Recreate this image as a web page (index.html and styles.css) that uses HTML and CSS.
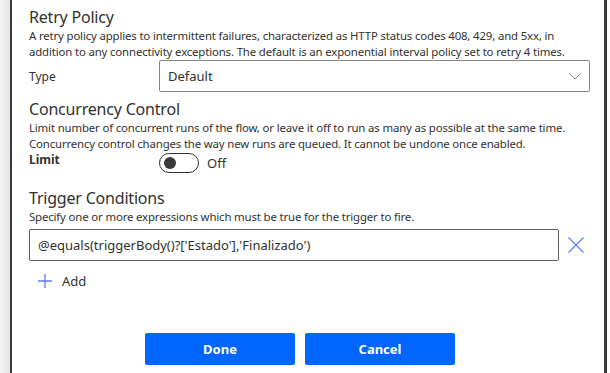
FILE: index.html
```html
<!DOCTYPE html>
<html>
<head>
<meta charset="utf-8">
<link rel="stylesheet" href="styles.css">
</head>
<body>
<div class="screen">
  <div class="shade"></div>
  <div class="panel">
    <div class="content">
      <section class="sec">
        <h2 class="title">Retry Policy</h2>
        <p class="desc">A retry policy applies to intermittent failures, characterized as HTTP status codes 408, 429, and 5xx, in addition to any connectivity exceptions. The default is an exponential interval policy set to retry 4 times.</p>
        <div class="row">
          <span class="label">Type</span>
          <div class="select">
            <span>Default</span>
            <svg class="chev" width="12" height="7" viewBox="0 0 12 7"><path d="M0.5 0.5 L6 6 L11.5 0.5" fill="none" stroke="#8a8886" stroke-width="1"/></svg>
          </div>
        </div>
      </section>
      <section class="sec sec2">
        <h2 class="title">Concurrency Control</h2>
        <p class="desc">Limit number of concurrent runs of the flow, or leave it off to run as many as possible at the same time. Concurrency control changes the way new runs are queued. It cannot be undone once enabled.</p>
        <div class="row row-toggle">
          <span class="label bold">Limit</span>
          <div class="toggle-wrap">
            <span class="toggle"><span class="knob"></span></span>
            <span class="toggle-text">Off</span>
          </div>
        </div>
      </section>
      <section class="sec sec3">
        <h2 class="title">Trigger Conditions</h2>
        <p class="desc">Specify one or more expressions which must be true for the trigger to fire.</p>
        <div class="cond">
          <div class="input">@equals(triggerBody()?['Estado'],'Finalizado')</div>
          <svg class="x" width="16" height="16" viewBox="0 0 16 16"><path d="M0.5 0.5 L15.5 15.5 M15.5 0.5 L0.5 15.5" stroke="#5b7cf5" stroke-width="1.2" fill="none"/></svg>
        </div>
        <div class="add">
          <svg width="16" height="16" viewBox="0 0 16 16"><path d="M8 1 V15 M1 8 H15" stroke="#5b7cf5" stroke-width="1.3" fill="none"/></svg>
          <span>Add</span>
        </div>
      </section>
      <div class="buttons">
        <button class="btn">Done</button>
        <button class="btn">Cancel</button>
      </div>
    </div>
  </div>
</div>
</body>
</html>
```
FILE: styles.css
```css
* { box-sizing: border-box; }
html, body { margin: 0; padding: 0; background: #fff; }
body {
  font-family: "Noto Sans", "Open Sans", sans-serif;
  color: #323130;
  width: 610px;
  height: 373px;
  overflow: hidden;
}
.screen { display: flex; height: 373px; }
.shade {
  width: 10px;
  background: linear-gradient(to right, #f4f4f4, #e6e6e6);
}
.panel {
  width: 597px;
  border-left: 2px solid #3a3a3a;
  border-right: 3px solid #3b3b3b;
  background: #fff;
}
.content { padding: 6px 0 0 17px; width: 578px; }
.title {
  margin: 0;
  font-size: 16px;
  font-weight: 400;
  line-height: 22px;
  letter-spacing: -0.2px;
}
.desc {
  margin: 0;
  font-size: 11.4px;
  line-height: 16px;
  letter-spacing: -0.15px;
}
.row { display: flex; align-items: center; }
.label { width: 130px; font-size: 12px; }
.bold { font-weight: 700; }
.select {
  width: 431px;
  height: 32px;
  border: 1px solid #8a8886;
  border-radius: 2px;
  display: flex;
  align-items: center;
  justify-content: space-between;
  padding: 0 8px 0 8px;
  font-size: 13px;
}
.chev { display: block; margin-top: 1px; }
.sec2 { margin-top: 6px; }
.row-toggle { align-items: flex-start; height: 24px; }
.row-toggle .label { line-height: 16px; margin-top: 0; }
.toggle-wrap { display: flex; align-items: center; gap: 8px; margin-top: 1px; }
.toggle {
  width: 40px; height: 20px;
  border: 1px solid #323130;
  border-radius: 10px;
  display: flex; align-items: center;
  padding-left: 4px;
}
.knob { width: 12px; height: 12px; border-radius: 50%; background: #3b3a39; }
.toggle-text { font-size: 13px; }
.sec3 { margin-top: 11px; }
.cond { display: flex; align-items: center; margin-top: 4px; gap: 9px; }
.input {
  width: 530px;
  height: 32px;
  border: 1px solid #605e5c;
  border-radius: 2px;
  display: flex; align-items: center;
  padding-left: 8px;
  font-size: 13px;
}
.add {
  display: flex; align-items: center; gap: 9px;
  margin: 12px 0 0 8px;
  font-size: 13px;
  height: 16px;
}
.add svg { display: block; }
.buttons {
  display: flex; gap: 10px;
  margin: 44px 0 0 116px;
}
.btn {
  width: 150px; height: 32px;
  background: #0066ff;
  color: #fff;
  border: none;
  border-radius: 2px;
  font-family: "Noto Sans", "Open Sans", sans-serif;
  font-weight: 700;
  font-size: 13px;
}
```
